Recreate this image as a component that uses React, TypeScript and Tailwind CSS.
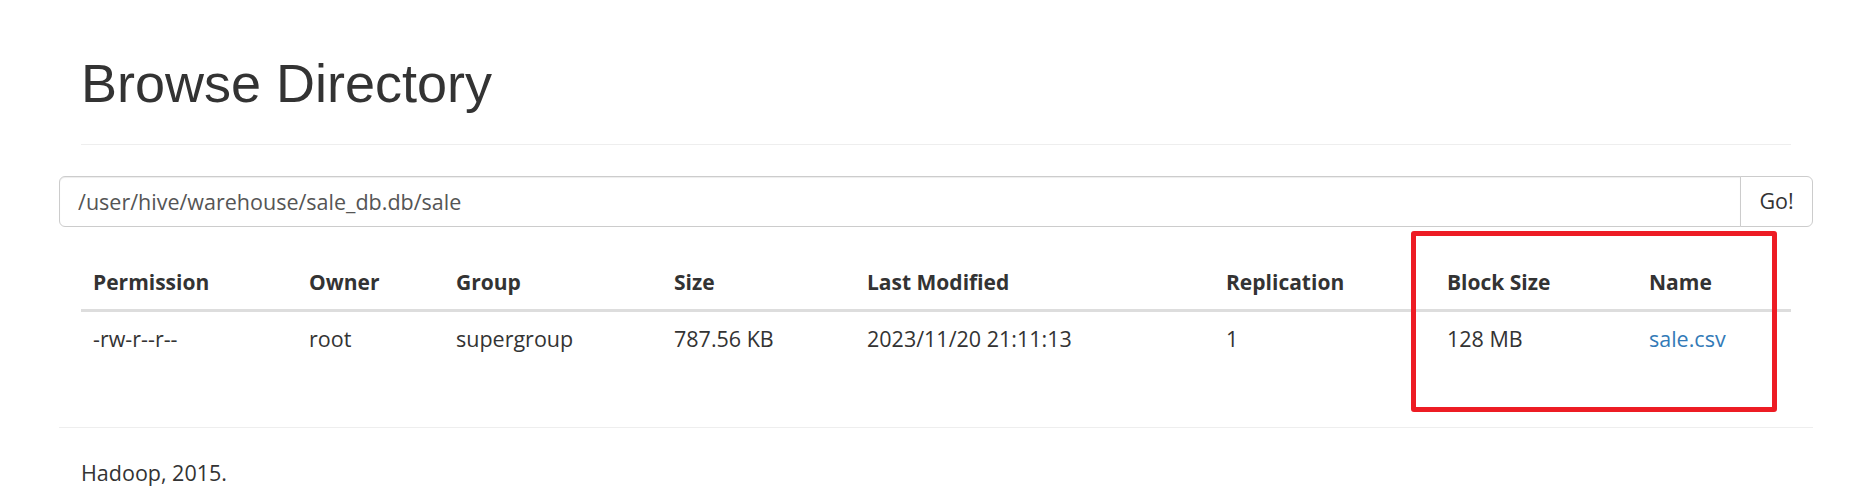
import React from 'react';

const cols = [
  { label: 'Permission', value: '-rw-r--r--', w: 'w-[216px]' },
  { label: 'Owner', value: 'root', w: 'w-[147px]' },
  { label: 'Group', value: 'supergroup', w: 'w-[218px]' },
  { label: 'Size', value: '787.56 KB', w: 'w-[193px]' },
  { label: 'Last Modified', value: '2023/11/20 21:11:13', w: 'w-[359px]' },
  { label: 'Replication', value: '1', w: 'w-[221px]' },
  { label: 'Block Size', value: '128 MB', w: 'w-[202px]' },
  { label: 'Name', value: 'sale.csv', w: '' },
];

export default function App() {
  return (
    <div
      className="relative min-h-screen bg-white text-[#333]"
      style={{ fontFamily: '"Open Sans", "Noto Sans", sans-serif' }}
    >
      <div className="pt-[54px] pl-[59px] pr-[56px]">
        {/* Page header */}
        <div className="mx-[22px] border-b border-[#eee] pb-[31px]">
          <h1
            className="text-[54px] leading-[59px] font-normal text-[#333]"
            style={{ fontFamily: '"Liberation Sans", Arial, sans-serif' }}
          >
            Browse Directory
          </h1>
        </div>

        {/* Path input */}
        <form className="mt-[31px] flex h-[51px]" onSubmit={(e) => e.preventDefault()}>
          <input
            readOnly
            defaultValue="/user/hive/warehouse/sale_db.db/sale"
            className="h-full flex-1 rounded-l-[6px] border border-[#ccc] px-[18px] text-[21.5px] text-[#555] shadow-[inset_0_1px_1px_rgba(0,0,0,0.075)] outline-none"
          />
          <button
            type="submit"
            className="-ml-px h-full w-[73px] rounded-r-[6px] border border-[#ccc] bg-white text-[21.5px] text-[#333]"
          >
            Go!
          </button>
        </form>

        {/* Listing */}
        <div className="mx-[22px] mt-[28px]">
          <table className="w-full table-fixed border-collapse text-[21.5px]">
            <thead>
              <tr>
                {cols.map((c) => (
                  <th
                    key={c.label}
                    className={`${c.w} border-b-[3px] border-[#ddd] px-[12px] py-[12px] text-left text-[21px] font-bold leading-[30px]`}
                  >
                    {c.label}
                  </th>
                ))}
              </tr>
            </thead>
            <tbody>
              <tr>
                {cols.map((c) => (
                  <td key={c.label} className="px-[12px] py-[12px] leading-[30px]">
                    {c.label === 'Name' ? (
                      <a href="#" className="text-[#337ab7]">
                        {c.value}
                      </a>
                    ) : (
                      c.value
                    )}
                  </td>
                ))}
              </tr>
            </tbody>
          </table>
        </div>

        <hr className="mt-[61px] border-t border-[#eee]" />

        <p className="mx-[22px] mt-[30px] text-[21.5px] leading-[30px]">Hadoop, 2015.</p>
      </div>

      {/* Annotation box */}
      <div className="absolute left-[1411px] top-[231px] h-[181px] w-[366px] rounded-[3px] border-[5px] border-[#ed1c24]" />
    </div>
  );
}
